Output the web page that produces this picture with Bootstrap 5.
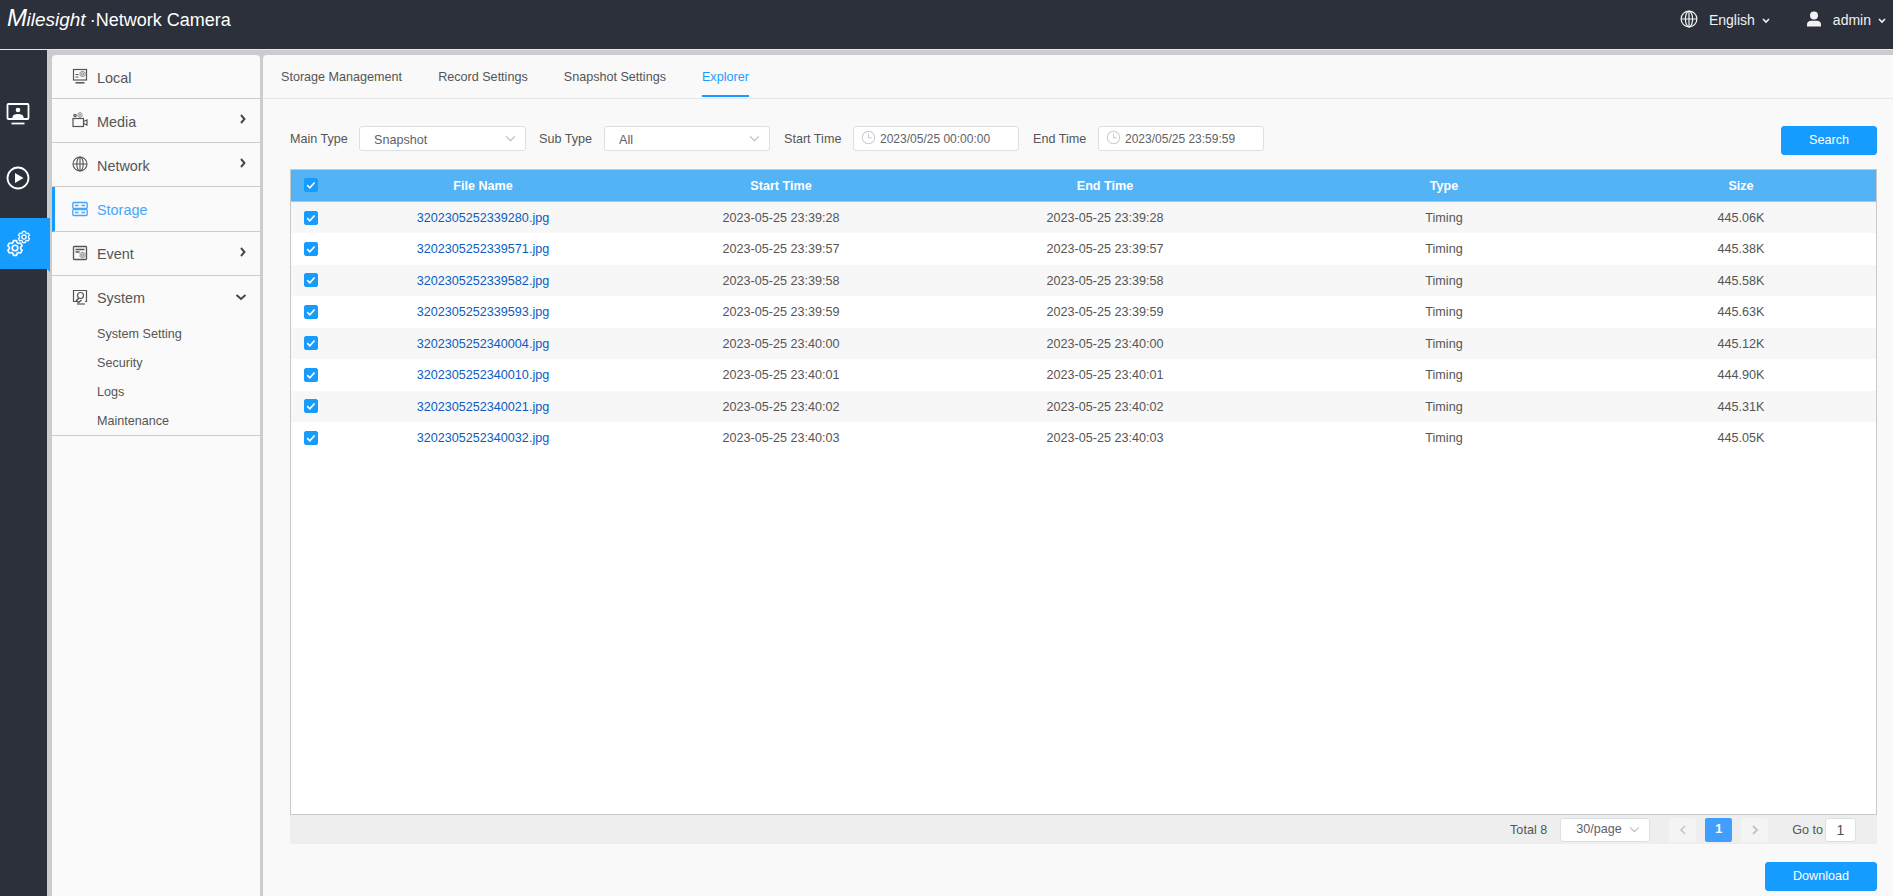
<!DOCTYPE html>
<html lang="en"><head><meta charset="utf-8"><title>Milesight Network Camera</title>
<link rel="stylesheet" href="https://cdn.jsdelivr.net/npm/bootstrap@5.3.0/dist/css/bootstrap.min.css">
<style>
html,body{height:896px;overflow:hidden}
body{font-family:"Liberation Sans",Arial,sans-serif;background:#ccc;color:#555;font-size:12.6px}
.ms-top{height:50px;background:#2b303b;border-bottom:1px solid #e6e6e6;color:#fff;padding:0 6px 10px 7px}
.ms-brand{font-size:18px;line-height:24px;margin-top:-1px;white-space:nowrap}
.ms-logo{font-style:italic;font-size:19px;margin-right:4px}
.ms-logo b{font-size:24px;font-weight:400;letter-spacing:-.5px}
.ms-tool{font-size:14px;color:#f2f2f2;margin-top:1px}
.ms-shell{height:846px}
.ms-rail{width:47px;background:#2b303b;padding-top:38px;gap:13px}
.ms-railitem{height:51px;width:47px;position:relative;padding-left:6px}
.ms-railitem.on{background:#169bff;width:50px;margin-top:2px}
.ms-railitem.on::after{content:"";position:absolute;right:0;bottom:-3px;border-top:3px solid #169bff;border-left:3px solid transparent}
.ms-side{width:208px;margin:5px 3px 0 5px;background:#fafafa;border-radius:4px 4px 0 0;font-size:14.4px}
.ms-row{height:44px;border-bottom:1px solid #ccc;padding:3px 9px 0 20px;color:#555}
.ms-row.ms-low{padding-top:5px}
.ms-row.ms-sys{padding-top:2px}
.ms-row.on{height:45px;color:#46a6fb;border-left:3px solid #169bff;padding-left:17px}
.ms-ico{width:16px;height:16px;margin-right:9px;flex:none;margin-top:-4px}
.ms-low .ms-ico{margin-top:-6px}
.ms-sub{height:29px;line-height:29px;padding-left:45px;font-size:12.6px}
.ms-subwrap{border-bottom:1px solid #ccc;height:160px}
.ms-main{margin-top:5px;background:#f9f9f9;border-radius:4px 0 0 0;padding:0 16px 0 27px;min-width:0}
.ms-tabs{height:44px;margin:0 -16px 0 -27px;padding-left:18px;border-bottom:1px solid #e4e7ed;gap:36px;flex-wrap:nowrap}
.ms-tab{height:43px;line-height:44px;color:#555;text-decoration:none;position:relative}
.ms-tab.on{color:#1e9bff;border-bottom:2px solid #169bff;height:42px}
.ms-filter{margin-top:27px;height:29px;font-size:12.6px;width:1587px}
.ms-lab{line-height:27px}
.ms-field{height:25px;border:1px solid #dcdfe6;border-radius:3px;background-color:#fff;font-size:12.6px;color:#606266;padding:3px 14px 0;line-height:21px;box-shadow:none}
select.ms-field{background-image:url("data:image/svg+xml,%3csvg xmlns='http://www.w3.org/2000/svg' viewBox='0 0 12 8'%3e%3cpath fill='none' stroke='%23bbb' stroke-width='1.2' d='M1 1.5l5 5 5-5'/%3e%3c/svg%3e");background-size:11px 7px;background-position:right 9px center}
.ms-date{width:166px;padding:1px 0 0 7px;display:flex;align-items:center;gap:4px;font-size:12px}
.ms-date svg{margin-top:-3px}
.ms-btn{--bs-btn-bg:#169bff;--bs-btn-border-color:#169bff;--bs-btn-hover-bg:#169bff;--bs-btn-hover-border-color:#169bff;font-size:12.6px;height:29px;padding:0;border-radius:3px}
.ms-tablebox{width:1587px;height:646px;margin-top:14px;border:1px solid #c8c8c8;background:#fff;overflow:hidden}
.ms-table{table-layout:fixed;width:1585px;margin:0;font-size:12.6px;--bs-table-bg:transparent;--bs-table-color:#555;--bs-table-border-color:transparent}
.ms-table th{background:#53b3f5;color:#fff;height:31.5px;padding:1px 0 0;font-weight:700;border-bottom:1px solid #8fcdf8;vertical-align:middle;line-height:1}
.ms-table td{height:31.5px;padding:2px 0 0;vertical-align:middle;border:0}
.ms-table tbody tr:nth-child(odd) td{background:#f7f7f7}
.ms-table a{color:#0b5cc0;text-decoration:none}
.ms-table .form-check-input{width:14px;height:14px;margin:-2px 0 0 13px;border-radius:2px;background-color:#169bff;border-color:#169bff;display:block;
 background-image:url("data:image/svg+xml,%3csvg xmlns='http://www.w3.org/2000/svg' viewBox='0 0 14 14'%3e%3cpath fill='none' stroke='%23fff' stroke-width='1.900' d='M2.600 7.200l3 3 5.600-6.200'/%3e%3c/svg%3e");background-size:100% 100%}
.ms-pager{width:1587px;height:29px;background:#eee;padding-right:21px;font-size:12.6px}
.ms-pagebtn{width:27px;height:24px;background:#f4f4f5;border-radius:2px;color:#c0c4cc;border:0;padding:0}
.ms-pagebtn.on{background:#409eff;color:#fff;font-weight:700}
.ms-pagesel{width:90px;height:24px;padding:0 0 0 15px}
.ms-goto{width:31px;height:24px;border:1px solid #dcdfe6;border-radius:3px;background:#fff;text-align:center;line-height:22px;font-size:14px}
.ms-foot{margin-top:18px;width:1587px}
</style></head><body>
<svg width="0" height="0" class="d-none" aria-hidden="true">
<symbol id="gear" viewBox="-12 -12 24 24"><polygon fill="none" stroke="currentColor" stroke-width="2.200" stroke-linejoin="round" points="-2.08,-9.78 2.08,-9.78 2.85,-7.05 4.68,-5.99 7.43,-6.69 9.51,-3.09 7.53,-1.06 7.53,1.06 9.51,3.09 7.43,6.69 4.68,5.99 2.85,7.05 2.08,9.78 -2.08,9.78 -2.85,7.05 -4.68,5.99 -7.43,6.69 -9.51,3.09 -7.53,1.06 -7.53,-1.06 -9.51,-3.09 -7.43,-6.69 -4.68,-5.99 -2.85,-7.05"/><circle r="3.7" fill="none" stroke="currentColor" stroke-width="2.200"/></symbol>
<symbol id="globe" viewBox="0 0 16 16"><g fill="none" stroke="currentColor" stroke-width="1.100"><circle cx="8" cy="8" r="7"/><ellipse cx="8" cy="8" rx="3.200" ry="7"/><path d="M1 8h14M8 1v14"/></g></symbol>
<symbol id="clock" viewBox="0 0 16 16"><g fill="none" stroke="#c9ccd6" stroke-width="1.100"><circle cx="8" cy="8" r="6.600"/><path d="M8 3.800V8.300h3.600"/></g></symbol>
</svg>
<header class="ms-top d-flex align-items-center justify-content-between">
  <div class="ms-brand"><span class="ms-logo"><b>M</b>ilesight</span>·Network Camera</div>
  <div class="ms-tool d-flex align-items-center">
    <svg width="18" height="18" style="margin-top:-2px"><use href="#globe"/></svg><span style="margin-left:11px">English</span>
    <svg width="10" height="8" viewBox="0 0 10 8" style="margin-left:6px;margin-top:2px"><path d="M2 2l3 3 3-3" fill="none" stroke="#f2f2f2" stroke-width="1.600"/></svg>
    <svg width="16" height="16" viewBox="0 0 16 16" fill="#f2f2f2" style="margin-left:35px;margin-top:-3px"><circle cx="8" cy="4.400" r="4"/><path d="M1 15.600v-2.400C1 11 3 9.800 5 9.800h6c2 0 4 1.200 4 3.400v2.400z"/></svg>
    <span style="margin-left:11px">admin</span>
    <svg width="10" height="8" viewBox="0 0 10 8" style="margin-left:6px;margin-top:2px"><path d="M2 2l3 3 3-3" fill="none" stroke="#f2f2f2" stroke-width="1.600"/></svg>
  </div>
</header>
<div class="ms-shell d-flex">
  <nav class="ms-rail d-flex flex-column flex-shrink-0">
    <div class="ms-railitem d-flex align-items-center">
      <svg width="24" height="24" viewBox="0 0 24 24"><rect x="1.500" y="2" width="21" height="15" rx="1" fill="none" stroke="#fff" stroke-width="1.800"/><circle cx="12" cy="8" r="2.300" fill="#fff"/><path d="M6.500 17v-1.800c0-2 2.300-3.200 5.500-3.200s5.500 1.200 5.500 3.200V17z" fill="#fff"/><path d="M5.500 21.500h13" stroke="#fff" stroke-width="1.800"/></svg>
    </div>
    <div class="ms-railitem d-flex align-items-center">
      <svg width="24" height="24" viewBox="0 0 24 24"><circle cx="12" cy="12" r="10.500" fill="none" stroke="#fff" stroke-width="1.800"/><path d="M9 7l8.500 5L9 17z" fill="#fff"/></svg>
    </div>
    <div class="ms-railitem on d-flex align-items-center">
      <svg width="25" height="28" viewBox="0 0 25 28" class="text-white"><use href="#gear" x="0" y="9" width="18" height="18"/><use href="#gear" x="11" y="0" width="14" height="14"/></svg>
    </div>
  </nav>
  <aside class="ms-side flex-shrink-0">
    <div class="ms-row ms-low d-flex align-items-center"><svg class="ms-ico" viewBox="0 0 16 16"><g fill="none" stroke="#555" stroke-width="1.200"><rect x="1.500" y="1.500" width="13" height="10.500"/><path d="M3.500 14.800h9" stroke-width="1.500"/><path d="M3.500 6.500h3M3.500 9h3"/></g><use href="#gear" x="7" y="2.500" width="7" height="7" color="#555"/></svg>Local</div>
    <div class="ms-row ms-low d-flex align-items-center"><svg class="ms-ico" viewBox="0 0 16 16"><g fill="none" stroke="#555" stroke-width="1.200"><rect x="1" y="6.500" width="10.500" height="8"/><path d="M11.500 9.500l3.500-1.500v5l-3.500-1.500"/><circle cx="3" cy="3.500" r="1.200"/></g><use href="#gear" x="5" y="0" width="6" height="6" color="#555"/></svg>Media<svg class="ms-auto me-1" width="8" height="10" viewBox="0 0 8 10" style="margin-top:-8px"><path d="M2 1l3.500 4L2 9" fill="none" stroke="#444" stroke-width="1.900"/></svg></div>
    <div class="ms-row ms-low d-flex align-items-center"><svg class="ms-ico" style="color:#555"><use href="#globe"/></svg>Network<svg class="ms-auto me-1" width="8" height="10" viewBox="0 0 8 10" style="margin-top:-8px"><path d="M2 1l3.500 4L2 9" fill="none" stroke="#444" stroke-width="1.900"/></svg></div>
    <div class="ms-row on d-flex align-items-center"><svg class="ms-ico" viewBox="0 0 16 16"><g fill="none" stroke="#46a6fb" stroke-width="1.300"><rect x=".8" y="1.500" width="14.400" height="6" rx="1"/><rect x=".8" y="8.500" width="14.400" height="6" rx="1"/><path d="M3 4.500h3.500M9.500 4.500H13M3 11.500h3.500M9.500 11.500H13"/></g></svg>Storage</div>
    <div class="ms-row d-flex align-items-center"><svg class="ms-ico" viewBox="0 0 16 16"><g fill="none" stroke="#555" stroke-width="1.300"><rect x="1.500" y="1.500" width="13" height="13" rx=".8"/><path d="M3.500 4.500h9M3.500 7h4"/></g><use href="#gear" x="7" y="6.500" width="7" height="7" color="#555"/></svg>Event<svg class="ms-auto me-1" width="8" height="10" viewBox="0 0 8 10" style="margin-top:-6px"><path d="M2 1l3.500 4L2 9" fill="none" stroke="#444" stroke-width="1.900"/></svg></div>
    <div class="ms-subwrap">
      <div class="d-flex align-items-center ms-row ms-sys border-0"><svg class="ms-ico" viewBox="0 0 16 16"><g fill="none" stroke="#555" stroke-width="1.200"><path d="M5 12.500H1.500v-11h13v11H13"/><circle cx="8.500" cy="6.500" r="3"/><path d="M7 9l-2.500 2.500 2 2L9.500 11" stroke-width="1.500"/><path d="M5 15h8"/></g></svg>System<svg class="ms-auto me-1" width="12" height="8" viewBox="0 0 12 8" style="margin-top:-5px"><path d="M1.500 2L6 6l4.500-4" fill="none" stroke="#444" stroke-width="1.900"/></svg></div>
      <div class="ms-sub">System Setting</div><div class="ms-sub">Security</div><div class="ms-sub">Logs</div><div class="ms-sub">Maintenance</div>
    </div>
  </aside>
  <main class="ms-main flex-grow-1">
    <div class="nav ms-tabs">
      <a class="ms-tab" href="#">Storage Management</a><a class="ms-tab" href="#">Record Settings</a><a class="ms-tab" href="#">Snapshot Settings</a><a class="ms-tab on" href="#">Explorer</a>
    </div>
    <div class="ms-filter d-flex align-items-start">
      <span class="ms-lab" style="width:69px">Main Type</span>
      <select class="form-select ms-field" style="width:167px" aria-label="Main Type"><option>Snapshot</option></select>
      <span class="ms-lab" style="margin-left:13px;width:65px">Sub Type</span>
      <select class="form-select ms-field" style="width:166px" aria-label="Sub Type"><option>All</option></select>
      <span class="ms-lab" style="margin-left:14px;width:69px">Start Time</span>
      <div class="ms-field ms-date"><svg width="15" height="15"><use href="#clock"/></svg>2023/05/25 00:00:00</div>
      <span class="ms-lab" style="margin-left:14px;width:65px">End Time</span>
      <div class="ms-field ms-date"><svg width="15" height="15"><use href="#clock"/></svg>2023/05/25 23:59:59</div>
      <button class="btn btn-primary ms-btn ms-auto" style="width:96px">Search</button>
    </div>
    <div class="ms-tablebox">
      <table class="table ms-table text-center">
        <colgroup><col style="width:41px"><col style="width:302px"><col style="width:294px"><col style="width:354px"><col style="width:324px"><col></colgroup>
        <thead><tr><th><input class="form-check-input" type="checkbox" checked aria-label="All"></th><th>File Name</th><th>Start Time</th><th>End Time</th><th>Type</th><th>Size</th></tr></thead>
        <tbody>
          <tr><td><input class="form-check-input" type="checkbox" checked aria-label="Select"></td><td><a href="#">3202305252339280.jpg</a></td><td>2023-05-25 23:39:28</td><td>2023-05-25 23:39:28</td><td>Timing</td><td>445.06K</td></tr>
          <tr><td><input class="form-check-input" type="checkbox" checked aria-label="Select"></td><td><a href="#">3202305252339571.jpg</a></td><td>2023-05-25 23:39:57</td><td>2023-05-25 23:39:57</td><td>Timing</td><td>445.38K</td></tr>
          <tr><td><input class="form-check-input" type="checkbox" checked aria-label="Select"></td><td><a href="#">3202305252339582.jpg</a></td><td>2023-05-25 23:39:58</td><td>2023-05-25 23:39:58</td><td>Timing</td><td>445.58K</td></tr>
          <tr><td><input class="form-check-input" type="checkbox" checked aria-label="Select"></td><td><a href="#">3202305252339593.jpg</a></td><td>2023-05-25 23:39:59</td><td>2023-05-25 23:39:59</td><td>Timing</td><td>445.63K</td></tr>
          <tr><td><input class="form-check-input" type="checkbox" checked aria-label="Select"></td><td><a href="#">3202305252340004.jpg</a></td><td>2023-05-25 23:40:00</td><td>2023-05-25 23:40:00</td><td>Timing</td><td>445.12K</td></tr>
          <tr><td><input class="form-check-input" type="checkbox" checked aria-label="Select"></td><td><a href="#">3202305252340010.jpg</a></td><td>2023-05-25 23:40:01</td><td>2023-05-25 23:40:01</td><td>Timing</td><td>444.90K</td></tr>
          <tr><td><input class="form-check-input" type="checkbox" checked aria-label="Select"></td><td><a href="#">3202305252340021.jpg</a></td><td>2023-05-25 23:40:02</td><td>2023-05-25 23:40:02</td><td>Timing</td><td>445.31K</td></tr>
          <tr><td><input class="form-check-input" type="checkbox" checked aria-label="Select"></td><td><a href="#">3202305252340032.jpg</a></td><td>2023-05-25 23:40:03</td><td>2023-05-25 23:40:03</td><td>Timing</td><td>445.05K</td></tr>
        </tbody>
      </table>
    </div>
    <div class="ms-pager d-flex align-items-center justify-content-end">
      <span style="margin-right:13px;padding-top:2px">Total 8</span>
      <select class="form-select ms-field ms-pagesel" aria-label="Page size"><option>30/page</option></select>
      <button class="ms-pagebtn d-flex align-items-center justify-content-center" style="margin-left:19px" aria-label="Previous"><svg width="8" height="10" viewBox="0 0 8 10"><path d="M6 1L2 5l4 4" fill="none" stroke="#c0c4cc" stroke-width="1.600"/></svg></button>
      <button class="ms-pagebtn on" style="margin-left:9px">1</button>
      <button class="ms-pagebtn d-flex align-items-center justify-content-center" style="margin-left:9px" aria-label="Next"><svg width="8" height="10" viewBox="0 0 8 10"><path d="M2 1l4 4-4 4" fill="none" stroke="#c0c4cc" stroke-width="2"/></svg></button>
      <span style="margin-left:24px;margin-right:2px;padding-top:1px">Go to</span>
      <div class="ms-goto">1</div>
    </div>
    <div class="ms-foot d-flex justify-content-end"><button class="btn btn-primary ms-btn" style="width:112px">Download</button></div>
  </main>
</div>
<script src="https://cdn.jsdelivr.net/npm/bootstrap@5.3.0/dist/js/bootstrap.bundle.min.js"></script>
</body></html>
